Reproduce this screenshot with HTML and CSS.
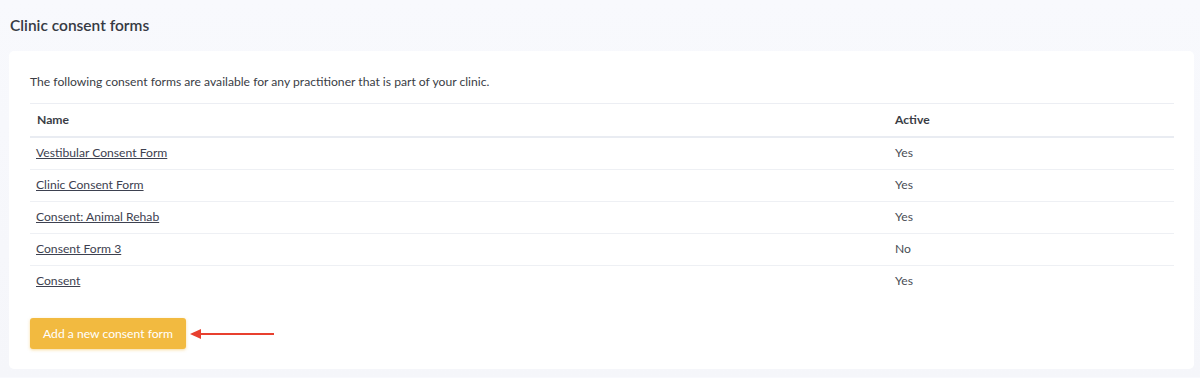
FILE: index.html
```html
<!DOCTYPE html>
<html>
	<head>
		<meta charset="utf-8">
		<title>Clinic consent forms</title>
		<link rel="stylesheet" href="styles.css">
	</head>
	<body>
		<h2 class="title">Clinic consent forms</h2>
		<div class="card">
			<p class="intro">The following consent forms are available for any practitioner that is part of your clinic.</p>
			<table class="forms">
				<thead>
					<tr><th class="name">Name</th><th>Active</th></tr>
				</thead>
				<tbody>
					<tr><td><a href="#">Vestibular Consent Form</a></td><td>Yes</td></tr>
					<tr><td><a href="#">Clinic Consent Form</a></td><td>Yes</td></tr>
					<tr><td><a href="#">Consent: Animal Rehab</a></td><td>Yes</td></tr>
					<tr><td><a href="#">Consent Form 3</a></td><td>No</td></tr>
					<tr><td><a href="#">Consent</a></td><td>Yes</td></tr>
				</tbody>
			</table>
			<div class="actions">
				<button class="add">Add a new consent form</button>
				<svg class="arrow" width="86" height="12" viewBox="0 0 86 12">
					<line x1="8" y1="6" x2="84" y2="6" stroke="#e8402f" stroke-width="2"/>
					<polygon points="0,6 11,1 11,11" fill="#e8402f"/>
				</svg>
			</div>
		</div>
	</body>
</html>
```

FILE: styles.css
```css
body, html{
	margin: 0;
	background: linear-gradient(#f8f9fd, #f5f6fa);
}
body{
	font-family: Lato, "Noto Sans", sans-serif;
	color: #3d4049;
	padding: 0 6px 8px 9px;
}
.title{
	font-size: 15.5px;
	font-weight: 600;
	margin: 0;
	padding: 16px 0 17px 1px;
	color: #363a43;
}
.card{
	background: #ffffff;
	border-radius: 5px;
	padding: 20px 20px 20px 21px;
}
.intro{
	font-size: 12.15px;
	margin: 3px 0 14px 0;
	color: #3a3d45;
}
.forms{
	width: 100%;
	border-collapse: collapse;
	font-size: 12.15px;
}
.forms th{
	text-align: left;
	font-weight: 700;
	padding: 7px 7px 9px 7px;
	height: 16px;
	border-top: 1px solid #eceef3;
	border-bottom: 2px solid #e9ecf2;
	color: #3a3d45;
}
.forms th.name{
	width: 844px;
}
.forms td{
	padding: 7px 6px 9px 6px;
	height: 15px;
	border-bottom: 1px solid #eef0f4;
	color: #4a4d55;
}
.forms td + td{
	padding-left: 7px;
}
.forms tbody tr:last-child td{
	border-bottom: none;
}
.forms a{
	color: #3d4150;
	text-decoration: underline;
}
.actions{
	display: flex;
	align-items: center;
	margin-top: 21px;
}
.add{
	font-family: Lato, "Noto Sans", sans-serif;
	font-size: 12.15px;
	color: #ffffff;
	background: #f2ba40;
	border: none;
	border-radius: 3px;
	padding: 0 13px;
	height: 31px;
	width: 156px;
	box-shadow: 0 1px 3px rgba(242, 186, 64, 0.5);
}
.arrow{
	margin-left: 4px;
}
```
